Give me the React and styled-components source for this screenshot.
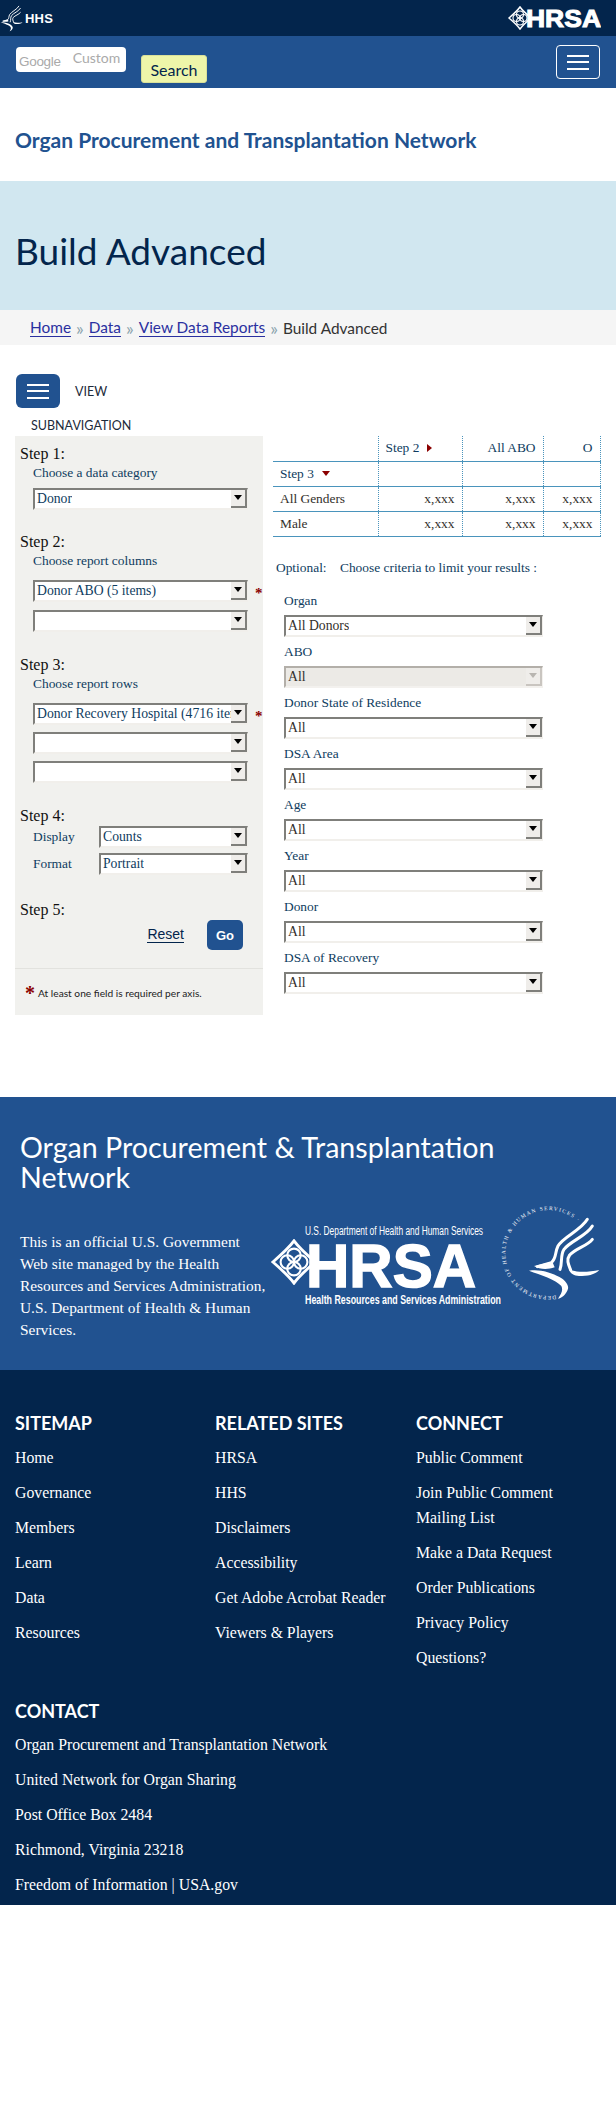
import React from "react";
import styled, { createGlobalStyle } from "styled-components";

const NAVY = "#03254c";
const BLUE = "#215290";
const LABEL = "#0e3c60";
const SERIF = `"Liberation Serif", "Times New Roman", serif`;
const SANS = `"Lato", "Noto Sans", sans-serif`;

const CSSReset = createGlobalStyle`
  *, *::before, *::after { box-sizing: border-box; margin: 0; padding: 0; }
  body { background: #fff; font-family: ${SERIF}; }
  a { color: inherit; text-decoration: none; }
`;

const Page = styled.div`
  width: 616px;
  min-height: 2102px;
  background: #fff;
`;

/* top bars */
const TopBar = styled.div`
  height: 36px;
  background: ${NAVY};
  display: flex;
  align-items: center;
  justify-content: space-between;
  padding: 0 15px 0 0;
`;
const HhsMark = styled.div`
  display: flex;
  align-items: center;
  gap: 2px;
  color: #fff;
  font: 700 13px "Liberation Sans", Arial, sans-serif;
  letter-spacing: 0.2px;
`;
const SearchBar = styled.div`
  height: 52px;
  background: ${BLUE};
  display: flex;
  padding-left: 16px;
  padding-right: 16px;
`;
const SearchInput = styled.div`
  width: 110px;
  height: 25px;
  margin-top: 11px;
  background: #fff;
  border-radius: 4px;
  display: flex;
  gap: 12px;
  padding-left: 3px;
  color: #aaa;
`;
const GoogleMark = styled.span`
  font: 13.5px/27px "Liberation Sans", Arial, sans-serif;
  letter-spacing: -0.3px;
  padding-top: 1px;
`;
const CustomMark = styled.span`
  font: 14px/21px ${SANS};
`;
const SearchButton = styled.button`
  width: 66px;
  height: 28px;
  margin: 19px 0 0 15px;
  background: #eef5a9;
  border: 1px solid #d9e09a;
  border-radius: 3px;
  color: ${NAVY};
  font: 400 16px ${SANS};
`;
const MenuToggle = styled.button`
  width: 44px;
  height: 34px;
  background: ${(p) => (p.$solid ? BLUE : "transparent")};
  border: ${(p) => (p.$solid ? "none" : "1px solid #fff")};
  border-radius: ${(p) => (p.$solid ? "6px" : "4px")};
  display: flex;
  flex-direction: column;
  align-items: center;
  justify-content: center;
  gap: 4.5px;
`;
const MenuBar = styled.span`
  width: 22px;
  height: 2px;
  background: #fff;
`;
const NavToggleSlot = styled.div`
  margin: 9px 0 0 auto;
`;

/* headers */
const SiteTitle = styled.div`
  height: 93px;
  padding: 37px 0 0 15px;
  color: ${BLUE};
  font: 700 21px/30px ${SANS};
`;
const Hero = styled.div`
  height: 129px;
  background: #d1e7f0;
  padding: 47px 0 0 15px;
`;
const HeroTitle = styled.h1`
  color: ${NAVY};
  font: 400 37px/46px ${SANS};
`;
const Crumbs = styled.div`
  height: 35px;
  background: #f5f5f5;
  padding-left: 30px;
  display: flex;
  align-items: center;
  gap: 5px;
  font: 15.4px ${SANS};
  color: #333;
`;
const CrumbLink = styled.a`
  color: #2a30a0;
  border-bottom: 1px solid #2a30a0;
`;
const CrumbSep = styled.span`
  color: #8aa3ad;
  font-size: 18px;
  line-height: 18px;
`;

/* subnav */
const SubNav = styled.div`
  padding: 29px 0 0 16px;
  height: 91px;
  color: #1c2a3a;
  font: 12.5px ${SANS};
`;
const SubNavRow = styled.div`
  display: flex;
  align-items: center;
  gap: 15px;
  height: 34px;
  margin-bottom: 10px;
`;
const SubNavBelow = styled.div`
  padding-left: 15px;
`;

/* main area */
const Main = styled.div`
  display: flex;
  align-items: flex-start;
  padding-left: 15px;
`;
const Panel = styled.form`
  width: 248px;
  height: 579px;
  background: #f1f1ee;
  padding-top: 8px;
`;
const StepHead = styled.div`
  padding-left: 5px;
  color: #111;
  font: 16px/20px ${SERIF};
  margin-top: ${(p) => p.$top || 0}px;
`;
const Hint = styled.div`
  padding-left: 18px;
  color: ${LABEL};
  font: 13.4px/18px ${SERIF};
  margin-bottom: ${(p) => p.$gap || 0}px;
`;
const SelectRow = styled.div`
  display: flex;
  align-items: center;
  margin: ${(p) => p.$top || 0}px 0 0 18px;
`;
const RowLabel = styled.span`
  width: 66px;
  color: ${LABEL};
  font: 13.4px ${SERIF};
`;
const SelectBox = styled.div`
  flex: none;
  width: ${(p) => p.$w || 215}px;
  height: 22px;
  display: flex;
  align-items: center;
  justify-content: space-between;
  background: ${(p) => (p.$off ? "#eceae6" : "#fff")};
  border-style: solid;
  border-width: 2px 1px 2px 2px;
  border-color: ${(p) => (p.$off ? "#b3afa9 #f3f1ee #f3f1ee #b3afa9" : "#7f7f7b #f1efeb #f1efeb #7f7f7b")};
  color: ${(p) => (p.$tone ? p.$tone : "#33302c")};
  font: 13.7px ${SERIF};
  padding-left: 2px;
  overflow: hidden;
`;
const SelectText = styled.span`
  white-space: nowrap;
  overflow: hidden;
`;
const ArrowBtn = styled.span`
  flex: none;
  width: 16px;
  height: 19px;
  margin-top: -1px;
  background: #efedea;
  border-right: 2px solid ${(p) => (p.$off ? "#c9c5c0" : "#7f7f7b")};
  border-bottom: 2px solid ${(p) => (p.$off ? "#c9c5c0" : "#7f7f7b")};
  display: flex;
  align-items: center;
  justify-content: center;
  &::after {
    content: "";
    border-style: solid;
    border-width: 5px 4px 0;
    border-color: ${(p) => (p.$off ? "#b8b5b0" : "#000")} transparent transparent;
  }
`;
const Req = styled.span`
  margin-left: 7px;
  color: #8b0000;
  font: 700 15px/14px ${SERIF};
  height: 10px;
`;
const Actions = styled.div`
  display: flex;
  align-items: center;
  justify-content: flex-end;
  gap: 23px;
  padding-right: 20px;
`;
const ResetLink = styled.a`
  color: ${NAVY};
  border-bottom: 1px solid ${NAVY};
  font: 14px/15px "Liberation Sans", Arial, sans-serif;
`;
const GoButton = styled.button`
  width: 36px;
  height: 30px;
  background: ${BLUE};
  border: none;
  border-radius: 5px;
  color: #fff;
  font: 700 13px "Liberation Sans", Arial, sans-serif;
`;
const Rule = styled.div`
  margin-top: 18px;
  border-top: 1px solid #e2e2de;
`;
const Note = styled.div`
  display: flex;
  align-items: center;
  gap: 3px;
  padding: 13px 0 0 10px;
  color: #222;
  font: 10.2px/22px ${SANS};
`;
const NoteStar = styled.span`
  color: #8b0000;
  font: 700 20px/20px ${SERIF};
  margin-top: -1px;
`;

/* right column */
const Side = styled.div`
  width: 328px;
  margin-left: 10px;
`;
const Grid = styled.table`
  width: 327px;
  table-layout: fixed;
  border-collapse: collapse;
  font: 13.4px ${SERIF};
  color: #33302c;
`;
const Cell = styled.td`
  height: 25px;
  padding: 0 7px;
  text-align: ${(p) => (p.$left ? "left" : "right")};
  color: ${(p) => (p.$head ? LABEL : "#33302c")};
  border-bottom: 1px solid #4a94bc;
  border-right: 1px dotted #4a94bc;
`;
const Tri = styled.span`
  display: inline-block;
  margin-left: 8px;
  border-style: solid;
  border-color: transparent;
  ${(p) =>
    p.$down
      ? "border-width: 5px 4.5px 0; border-top-color: #8b0000; vertical-align: 2px;"
      : "border-width: 4.5px 0 4.5px 5px; border-left-color: #8b0000; vertical-align: 0;"}
`;
const Optional = styled.div`
  margin: 22px 0 0 3px;
  color: ${LABEL};
  font: 13.4px/18px ${SERIF};
  white-space: pre;
`;
const Filters = styled.div`
  margin: 15px 0 0 11px;
`;
const FilterLabel = styled.div`
  color: ${LABEL};
  font: 13.4px/18px ${SERIF};
  margin: 6px 0 5px;
`;

/* footer */
const Band = styled.div`
  margin-top: 82px;
  height: 273px;
  background: ${BLUE};
  padding: 35px 15px 0 20px;
  color: #fff;
`;
const BandTitle = styled.h2`
  font: 400 28.6px/30px ${SANS};
  width: 500px;
`;
const BandRow = styled.div`
  display: flex;
  align-items: flex-start;
  margin-top: 13px;
`;
const BandText = styled.p`
  width: 251px;
  font: 15.4px/22px ${SERIF};
  margin-top: 26px;
  flex: none;
`;
const LogoSlot = styled.div`
  flex: none;
  margin-top: 18px;
`;
const Dark = styled.div`
  height: 535px;
  background: ${NAVY};
  padding: 42px 15px 0;
  color: #fff;
`;
const Columns = styled.div`
  display: grid;
  grid-template-columns: 200px 201px 160px;
`;
const ColHead = styled.h3`
  font: 700 18px/22px ${SANS};
  margin-bottom: ${(p) => p.$gap}px;
`;
const FootLink = styled.a`
  display: block;
  font: 15.8px/25px ${SERIF};
  margin-bottom: 10px;
`;
const ContactBlock = styled.div`
  margin-top: 20px;
`;

function Dropdown({ w, off, tone, children }) {
  return (
    <SelectBox $w={w} $off={off} $tone={tone}>
      <SelectText>{children}</SelectText>
      <ArrowBtn $off={off} />
    </SelectBox>
  );
}

/* HHS eagle, drawn in a 240x270 box */
function Eagle({ x, y, width, height, viewBox = "0 0 240 270" }) {
  return (
    <svg x={x} y={y} width={width} height={height} viewBox={viewBox} fill="none" stroke="#fff" strokeWidth="9" strokeLinecap="round" style={{ flex: "none" }}>
      <path d="M190 28 C170 62 118 80 102 108 C92 128 98 145 82 158 L40 170" />
      <path d="M205 48 C188 78 140 92 120 118 C108 136 116 158 108 178" />
      <path d="M205 88 C190 108 155 115 137 135 C126 150 134 165 140 180" />
      <path fill="#fff" stroke="none" d="M30 168 L85 155 L92 172 C70 180 45 178 30 168Z" />
      <path fill="#fff" stroke="none" d="M15 182 C50 176 85 190 105 200 C120 208 135 222 132 236 C128 250 118 262 102 266 C112 252 118 240 112 228 C95 208 50 195 15 182Z" />
      <path fill="#fff" stroke="none" d="M135 178 C165 190 195 185 226 180 C212 195 190 198 165 198 C150 197 138 190 135 178Z" />
    </svg>
  );
}

function Diamond({ x, y, size }) {
  return (
    <svg x={x} y={y} width={size} height={size} viewBox="0 0 48 48" fill="none" stroke="#fff" strokeWidth="3">
      <path d="M24 2 C29 9 38 17 46 24 C38 31 29 39 24 46 C19 39 10 31 2 24 C10 17 19 9 24 2Z" />
      <circle cx="17" cy="24" r="7" strokeWidth="2.2" />
      <circle cx="31" cy="24" r="7" strokeWidth="2.2" />
      <circle cx="24" cy="17" r="7" strokeWidth="2.2" />
      <circle cx="24" cy="31" r="7" strokeWidth="2.2" />
    </svg>
  );
}

function SmallHrsa() {
  return (
    <svg width="93" height="24" viewBox="0 0 93 24">
      <Diamond x={0} y={0} size={24} />
      <text x="18" y="21" textLength="75" lengthAdjust="spacingAndGlyphs" fill="#fff" stroke="#fff" strokeWidth="1" fontFamily="Liberation Sans" fontWeight="700" fontSize="24">HRSA</text>
    </svg>
  );
}

function BigLogo() {
  return (
    <svg width="230" height="84" viewBox="0 0 230 84" style={{ display: "block" }}>
      <text x="34" y="12" textLength="178" lengthAdjust="spacingAndGlyphs" fill="#fff" fontFamily="Liberation Sans" fontSize="12">U.S. Department of Health and Human Services</text>
      <Diamond x={0} y={16} size={46} />
      <text x="35" y="64" textLength="170" lengthAdjust="spacingAndGlyphs" fill="#fff" stroke="#fff" strokeWidth="1.5" fontFamily="Liberation Sans" fontWeight="700" fontSize="62">HRSA</text>
      <text x="34" y="81" textLength="196" lengthAdjust="spacingAndGlyphs" fill="#fff" fontFamily="Liberation Sans" fontWeight="700" fontSize="12">Health Resources and Services Administration</text>
    </svg>
  );
}

function Seal() {
  return (
    <svg width="100" height="96" viewBox="0 0 100 96" style={{ flex: "none" }}>
      <defs>
        <path id="sealArc" d="M 55 90.4 A 43 43 0 1 1 79 19" />
      </defs>
      <text fill="#fff" fontFamily="Liberation Serif" fontSize="5.4">
        <textPath href="#sealArc" textLength="192">DEPARTMENT OF HEALTH &amp; HUMAN SERVICES · USA</textPath>
      </text>
      <Eagle x={23} y={5} width={80} height={90} />
    </svg>
  );
}

const filters = [
  ["Organ", "All Donors"],
  ["ABO", "All", true],
  ["Donor State of Residence", "All"],
  ["DSA Area", "All"],
  ["Age", "All"],
  ["Year", "All"],
  ["Donor", "All"],
  ["DSA of Recovery", "All"],
];

const sitemap = ["Home", "Governance", "Members", "Learn", "Data", "Resources"];
const related = ["HRSA", "HHS", "Disclaimers", "Accessibility", "Get Adobe Acrobat Reader", "Viewers & Players"];
const connect = ["Public Comment", "Join Public Comment Mailing List", "Make a Data Request", "Order Publications", "Privacy Policy", "Questions?"];
const contact = [
  "Organ Procurement and Transplantation Network",
  "United Network for Organ Sharing",
  "Post Office Box 2484",
  "Richmond, Virginia 23218",
  "Freedom of Information | USA.gov",
];

export default function App() {
  return (
    <Page>
      <CSSReset />
      <TopBar>
        <HhsMark>
          <Eagle width={23} height={27} viewBox="10 20 220 250" />
          HHS
        </HhsMark>
        <SmallHrsa />
      </TopBar>
      <SearchBar>
        <SearchInput>
          <GoogleMark>Google</GoogleMark>
          <CustomMark>Custom</CustomMark>
        </SearchInput>
        <SearchButton type="button">Search</SearchButton>
        <NavToggleSlot>
          <MenuToggle type="button">
            <MenuBar />
            <MenuBar />
            <MenuBar />
          </MenuToggle>
        </NavToggleSlot>
      </SearchBar>

      <SiteTitle>Organ Procurement and Transplantation Network</SiteTitle>
      <Hero>
        <HeroTitle>Build Advanced</HeroTitle>
      </Hero>
      <Crumbs>
        <CrumbLink href="#">Home</CrumbLink>
        <CrumbSep>»</CrumbSep>
        <CrumbLink href="#">Data</CrumbLink>
        <CrumbSep>»</CrumbSep>
        <CrumbLink href="#">View Data Reports</CrumbLink>
        <CrumbSep>»</CrumbSep>
        <span>Build Advanced</span>
      </Crumbs>

      <SubNav>
        <SubNavRow>
          <MenuToggle type="button" $solid>
            <MenuBar />
            <MenuBar />
            <MenuBar />
          </MenuToggle>
          VIEW
        </SubNavRow>
        <SubNavBelow>SUBNAVIGATION</SubNavBelow>
      </SubNav>

      <Main>
        <Panel>
          <StepHead>Step 1:</StepHead>
          <Hint $gap={6}>Choose a data category</Hint>
          <SelectRow><Dropdown tone={LABEL}>Donor</Dropdown></SelectRow>

          <StepHead $top={22}>Step 2:</StepHead>
          <Hint $gap={10}>Choose report columns</Hint>
          <SelectRow><Dropdown tone={LABEL}>Donor ABO (5 items)</Dropdown><Req>*</Req></SelectRow>
          <SelectRow $top={8}><Dropdown /></SelectRow>

          <StepHead $top={23}>Step 3:</StepHead>
          <Hint $gap={10}>Choose report rows</Hint>
          <SelectRow><Dropdown tone={LABEL}>Donor Recovery Hospital (4716 items)</Dropdown><Req>*</Req></SelectRow>
          <SelectRow $top={7}><Dropdown /></SelectRow>
          <SelectRow $top={7}><Dropdown /></SelectRow>

          <StepHead $top={23}>Step 4:</StepHead>
          <SelectRow><RowLabel>Display</RowLabel><Dropdown w={149} tone={LABEL}>Counts</Dropdown></SelectRow>
          <SelectRow $top={5}><RowLabel>Format</RowLabel><Dropdown w={149} tone={LABEL}>Portrait</Dropdown></SelectRow>

          <StepHead $top={25}>Step 5:</StepHead>
          <Actions>
            <ResetLink href="#">Reset</ResetLink>
            <GoButton type="button">Go</GoButton>
          </Actions>
          <Rule />
          <Note>
            <NoteStar>*</NoteStar>
            At least one field is required per axis.
          </Note>
        </Panel>

        <Side>
          <Grid>
            <colgroup>
              <col style={{ width: 105 }} />
              <col style={{ width: 84 }} />
              <col style={{ width: 81 }} />
              <col style={{ width: 57 }} />
            </colgroup>
            <tbody>
              <tr>
                <Cell $left />
                <Cell $left $head>Step 2<Tri /></Cell>
                <Cell $head>All ABO</Cell>
                <Cell $head>O</Cell>
              </tr>
              <tr>
                <Cell $left $head>Step 3<Tri $down /></Cell>
                <Cell />
                <Cell />
                <Cell />
              </tr>
              <tr>
                <Cell $left>All Genders</Cell>
                <Cell>x,xxx</Cell>
                <Cell>x,xxx</Cell>
                <Cell>x,xxx</Cell>
              </tr>
              <tr>
                <Cell $left>Male</Cell>
                <Cell>x,xxx</Cell>
                <Cell>x,xxx</Cell>
                <Cell>x,xxx</Cell>
              </tr>
            </tbody>
          </Grid>
          <Optional>Optional:    Choose criteria to limit your results :</Optional>
          <Filters>
            {filters.map(([label, value, off]) => (
              <div key={label}>
                <FilterLabel>{label}</FilterLabel>
                <Dropdown w={259} off={off}>{value}</Dropdown>
              </div>
            ))}
          </Filters>
        </Side>
      </Main>

      <Band>
        <BandTitle>Organ Procurement &amp; Transplantation Network</BandTitle>
        <BandRow>
          <BandText>
            This is an official U.S. Government Web site managed by the Health Resources and Services Administration, U.S. Department of Health &amp; Human Services.
          </BandText>
          <LogoSlot>
            <BigLogo />
          </LogoSlot>
          <Seal />
        </BandRow>
      </Band>

      <Dark>
        <Columns>
          <div>
            <ColHead $gap={11}>SITEMAP</ColHead>
            {sitemap.map((t) => <FootLink href="#" key={t}>{t}</FootLink>)}
          </div>
          <div>
            <ColHead $gap={11}>RELATED SITES</ColHead>
            {related.map((t) => <FootLink href="#" key={t}>{t}</FootLink>)}
          </div>
          <div>
            <ColHead $gap={11}>CONNECT</ColHead>
            {connect.map((t) => <FootLink href="#" key={t}>{t}</FootLink>)}
          </div>
        </Columns>
        <ContactBlock>
          <ColHead $gap={10}>CONTACT</ColHead>
          {contact.map((t) => <FootLink href="#" key={t}>{t}</FootLink>)}
        </ContactBlock>
      </Dark>
    </Page>
  );
}
